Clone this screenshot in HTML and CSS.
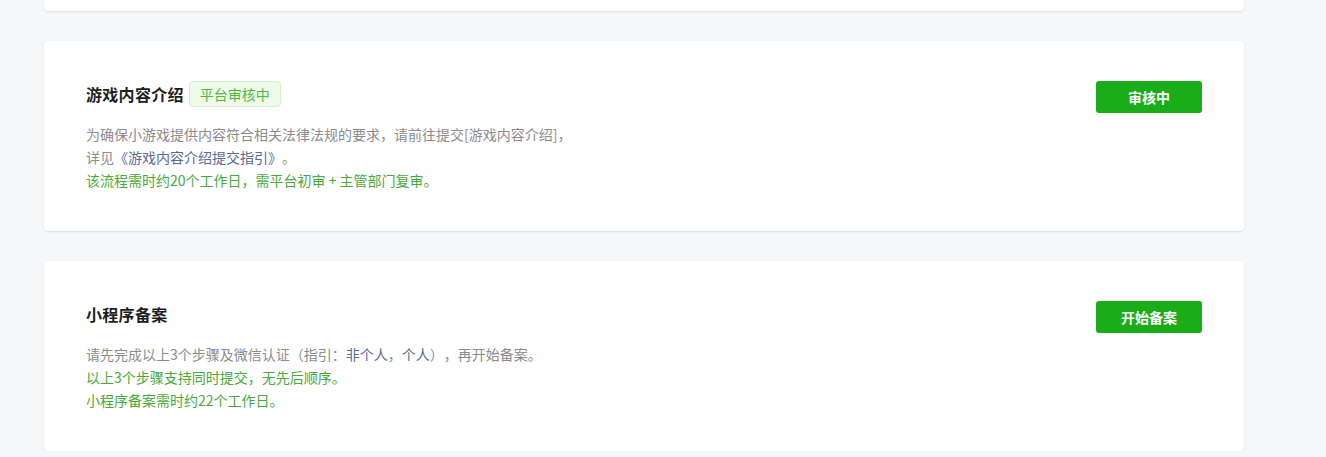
FILE: index.html
```html
<!DOCTYPE html>
<html>
<head>
<title>小程序备案</title>
<link rel="stylesheet" href="styles.css">
</head>
<body>

<div class="page">
  <div class="card card-cut"></div>

  <div class="card">
    <div class="card-main">
      <div class="card-head">
        <h3 class="card-title">游戏内容介绍</h3>
        <span class="tag">平台审核中</span>
      </div>
      <div class="card-desc">
        <p>为确保小游戏提供内容符合相关法律法规的要求，请前往提交[游戏内容介绍]，</p>
        <p>详见<a href="#">《游戏内容介绍提交指引》</a>。</p>
        <p class="tips">该流程需时约20个工作日，需平台初审 + 主管部门复审。</p>
      </div>
    </div>
    <button class="btn">审核中</button>
  </div>

  <div class="card">
    <div class="card-main">
      <div class="card-head">
        <h3 class="card-title">小程序备案</h3>
      </div>
      <div class="card-desc">
        <p>请先完成以上3个步骤及微信认证（指引：<a href="#">非个人</a>，<a href="#">个人</a>），再开始备案。</p>
        <p class="tips">以上3个步骤支持同时提交，无先后顺序。</p>
        <p class="tips">小程序备案需时约22个工作日。</p>
      </div>
    </div>
    <button class="btn">开始备案</button>
  </div>
</div>

</body>
</html>
```

FILE: styles.css
```css
html {
  background-color: #f6f7f9;
}

body {
  margin: 0px;
  font-family: "Noto Sans CJK SC", "Noto Sans", sans-serif;
  color: #353535;
  text-spacing-trim: space-all;
}

.page {
  width: 1200px;
  padding-left: 44px;
  display: flex;
  flex-direction: column;
  gap: 30px;
}

.card {
  background-color: white;
  border-radius: 4px;
  box-shadow: 0 1px 2px rgba(0, 0, 0, 0.1);
  padding: 40px 42px 39px 42px;
  display: flex;
  justify-content: space-between;
  align-items: flex-start;
  min-height: 111px;
}

.card-cut {
  height: 11px;
  min-height: 0;
  padding: 0;
  border-radius: 0 0 4px 4px;
}

.card-head {
  display: flex;
  align-items: center;
  height: 26px;
}

.card-title {
  margin: 0;
  font-size: 16px;
  font-weight: bold;
  color: #1f1f1f;
  line-height: 26px;
  letter-spacing: 0.3px;
}

.tag {
  margin-left: 5px;
  height: 24px;
  line-height: 24px;
  padding: 0 10px;
  font-size: 14px;
  color: #4fb83c;
  background-color: #effaea;
  border: 1px solid #d6f0c8;
  border-radius: 4px;
}

.card-desc {
  margin-top: 16px;
  font-size: 14px;
  line-height: 23px;
  color: #8c8c8c;
}

.card-desc p {
  margin: 0;
}

.card-desc a {
  color: #576b95;
  text-decoration: none;
}

.card-desc .tips {
  color: #47aa3c;
}

.btn {
  width: 106px;
  height: 32px;
  border: 0;
  border-radius: 3px;
  background-color: #1aad19;
  color: white;
  font-family: "Noto Sans CJK SC", sans-serif;
  font-size: 14px;
  font-weight: bold;
}
```
